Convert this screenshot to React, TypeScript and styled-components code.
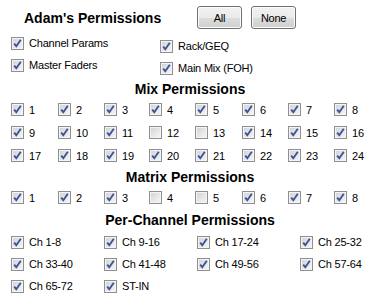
import React from "react";
import styled, { createGlobalStyle } from "styled-components";

const Global = createGlobalStyle`
  html, body { margin: 0; padding: 0; background: #ffffff; }
  body { font-family: "Liberation Sans", Arial, sans-serif; color: #000; }
`;

const Panel = styled.div`
  width: 380px;
  height: 300px;
  box-sizing: border-box;
  padding-top: 6px;
  background: #ffffff;
  overflow: hidden;
`;

const TopRow = styled.div`
  display: flex;
  align-items: center;
  height: 23px;
  padding-left: 24px;
`;

const Title = styled.div`
  width: 173px;
  font-size: 14px;
  font-weight: bold;
  white-space: nowrap;
`;

const Buttons = styled.div`
  display: flex;
  gap: 9px;
`;

const Button = styled.button`
  width: 45px;
  height: 23px;
  box-sizing: border-box;
  border: 1px solid #707070;
  border-radius: 3px;
  background: linear-gradient(#f2f2f2 0%, #ebebeb 50%, #dddddd 51%, #cfcfcf 100%);
  box-shadow: inset 0 0 0 1px #fcfcfc;
  font-family: "Liberation Sans", Arial, sans-serif;
  font-size: 11px;
  letter-spacing: -0.3px;
  color: #000;
  padding: 0;
`;

const TopChecks = styled.div`
  display: grid;
  grid-template-columns: 149px auto;
  padding-left: 11px;
  margin-top: 3px;
`;

const Column = styled.div<{ $offset?: number }>`
  display: flex;
  flex-direction: column;
  margin-top: ${(p) => p.$offset ?? 0}px;
`;

const Heading = styled.div<{ $gap?: number }>`
  text-align: center;
  font-size: 14px;
  font-weight: bold;
  line-height: 18px;
  height: 18px;
  margin-top: ${(p) => p.$gap ?? 0}px;
`;

const Grid = styled.div<{ $cols: string; $row: number; $mt?: number }>`
  display: grid;
  grid-template-columns: ${(p) => p.$cols};
  grid-auto-rows: ${(p) => p.$row}px;
  padding-left: 11px;
  margin-top: ${(p) => p.$mt ?? 0}px;
`;

const Item = styled.label<{ $h?: number }>`
  display: flex;
  align-items: center;
  gap: 5px;
  height: ${(p) => p.$h ?? 22}px;
  font-size: 11px;
  letter-spacing: -0.2px;
  white-space: nowrap;
`;

const Box = styled.span`
  flex: none;
  width: 13px;
  height: 13px;
  box-sizing: border-box;
  border: 1px solid #8e8f8f;
  background: linear-gradient(135deg, #cfd1d4 0%, #e6e7e8 55%, #f6f6f6 100%);
  box-shadow: inset 0 0 0 1px #f4f4f4;
  display: flex;
  align-items: center;
  justify-content: center;
`;

const Check = ({ on }: { on: boolean }) => (
  <Box>
    {on && (
      <svg width="11" height="11" viewBox="0 0 11 11">
        <path
          d="M2.2 5.6 L4.3 8.2 L8.8 1.8"
          fill="none"
          stroke="#3e5396"
          strokeWidth="1.9"
          strokeLinejoin="miter"
        />
      </svg>
    )}
  </Box>
);

const CheckItem = ({ label, on = true, h }: { label: string; on?: boolean; h?: number }) => (
  <Item $h={h}>
    <Check on={on} />
    <span>{label}</span>
  </Item>
);

const mixCols = "47px 46px 45px 46px 47px 46px 46px 46px";
const mixOff = new Set([12, 13]);
const matrixOff = new Set([4, 5]);
const channels = [
  "Ch 1-8",
  "Ch 9-16",
  "Ch 17-24",
  "Ch 25-32",
  "Ch 33-40",
  "Ch 41-48",
  "Ch 49-56",
  "Ch 57-64",
  "Ch 65-72",
  "ST-IN",
];

export default function App() {
  return (
    <>
      <Global />
      <Panel>
        <TopRow>
          <Title>Adam's Permissions</Title>
          <Buttons>
            <Button>All</Button>
            <Button>None</Button>
          </Buttons>
        </TopRow>
        <TopChecks>
          <Column>
            <CheckItem label="Channel Params" />
            <CheckItem label="Master Faders" />
          </Column>
          <Column $offset={3}>
            <CheckItem label="Rack/GEQ" />
            <CheckItem label="Main Mix (FOH)" />
          </Column>
        </TopChecks>
        <Heading $gap={1}>Mix Permissions</Heading>
        <Grid $cols={mixCols} $row={23}>
          {Array.from({ length: 24 }, (_, i) => (
            <CheckItem key={i} label={String(i + 1)} on={!mixOff.has(i + 1)} h={23} />
          ))}
        </Grid>
        <Heading $gap={1}>Matrix Permissions</Heading>
        <Grid $cols={mixCols} $row={23}>
          {Array.from({ length: 8 }, (_, i) => (
            <CheckItem key={i} label={String(i + 1)} on={!matrixOff.has(i + 1)} h={23} />
          ))}
        </Grid>
        <Heading $gap={2}>Per-Channel Permissions</Heading>
        <Grid $cols="93px 93px 103px auto" $row={22} $mt={2}>
          {channels.map((c) => (
            <CheckItem key={c} label={c} />
          ))}
        </Grid>
      </Panel>
    </>
  );
}
